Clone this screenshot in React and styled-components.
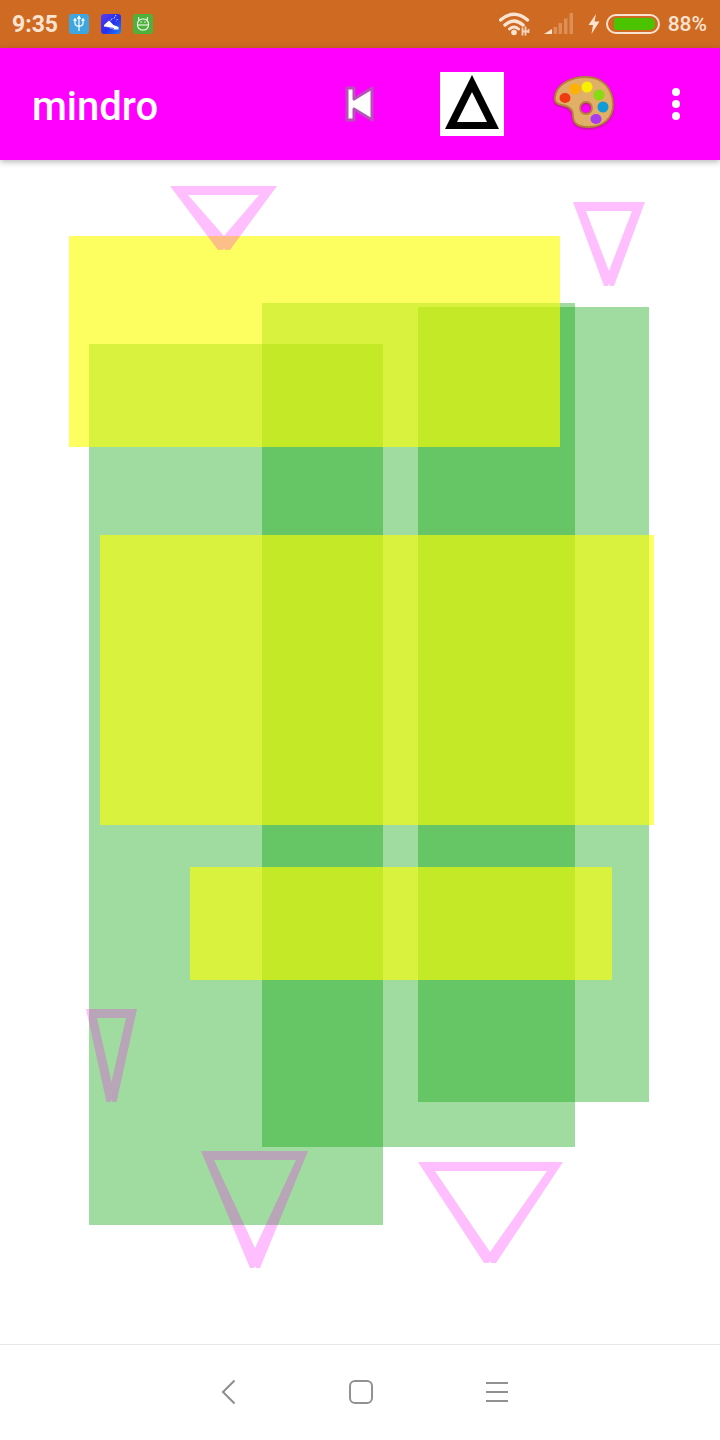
import React from "react";
import styled, { createGlobalStyle } from "styled-components";

const greens = [
  { x: 89, y: 344, w: 294, h: 881 },
  { x: 262, y: 303, w: 313, h: 844 },
  { x: 418, y: 307, w: 231, h: 795 },
];

const yellows = [
  { x: 69, y: 236, w: 491, h: 211 },
  { x: 100, y: 535, w: 554, h: 290 },
  { x: 190, y: 867, w: 422, h: 113 },
];

// coords are page pixels: outer top edge, inner top edge, inner tip, outer tip
const triangles = [
  { l: 170, r: 277, t: 186, il: 188, ir: 259, it: 195, ax: 224, ay: 236, by: 250, hw: 6 },
  { l: 573, r: 645, t: 202, il: 586, ir: 632, it: 211, ax: 609, ay: 271, by: 286, hw: 5 },
  { l: 86, r: 137, t: 1009, il: 97, ir: 126, it: 1018, ax: 111.5, ay: 1082, by: 1102, hw: 5 },
  { l: 201, r: 308, t: 1151, il: 214, ir: 296, it: 1160, ax: 255, ay: 1248, by: 1268, hw: 5 },
  { l: 418, r: 563, t: 1162, il: 435, ir: 547, it: 1171, ax: 490, ay: 1252, by: 1263, hw: 6 },
];

const CANVAS_TOP = 160;

const Triangle = ({ l, r, t, il, ir, it, ax, ay, by, hw }) => {
  const outer = `M${l} ${t}H${r}L${ax + hw} ${by}H${ax + 1}L${ax} ${by - 2}L${ax - 1} ${by}H${ax - hw}Z`;
  const inner = `M${il} ${it}H${ir}L${ax} ${ay}Z`;
  return (
    <TriangleSvg
      $x={l}
      $y={t - CANVAS_TOP}
      width={r - l}
      height={by - t}
      viewBox={`${l} ${t} ${r - l} ${by - t}`}
    >
      <path d={outer + inner} fillRule="evenodd" fill="rgba(255,0,255,.25)" />
    </TriangleSvg>
  );
};

const UsbGlyph = () => (
  <svg width="20" height="20" viewBox="0 0 20 20" fill="none" stroke="#fff" strokeWidth="1.2">
    <path d="M10 3V17M6 6V9.500Q6 11.500 10 12.500Q14 11.500 14 9.500V6" />
    <path d="M10 2.500L8.800 4.500H11.200ZM6 4.800L5.100 6.200H6.900ZM14 4.800L13.100 6.200H14.900Z" fill="#fff" />
  </svg>
);

const ShoeGlyph = () => (
  <svg width="20" height="20" viewBox="0 0 20 20">
    <path d="M3 11L8 6.500L10 8.500L12.500 11L17.500 13V15.500L13 15.500L3 12.500Z" fill="#fff" />
    <path d="M4 13L13 14.500" stroke="#2430f0" strokeWidth=".8" />
    <path d="M11 4.500L9.500 7M15 1L13 4.500M16.500 5L15 7.500" stroke="#d8ecff" strokeWidth="1" strokeDasharray="1.500 1" fill="none" />
  </svg>
);

const RobotGlyph = () => (
  <svg width="20" height="20" viewBox="0 0 20 20" fill="none" stroke="#fff" strokeWidth="1.100">
    <rect x="4.500" y="5" width="11" height="11" rx="5" />
    <path d="M4.500 11H15.500M6 6L5.500 3M14 6L14.500 3" />
    <path d="M7.500 8H8.500M11.500 8H12.500" strokeWidth="1.400" />
  </svg>
);

const WifiGlyph = () => (
  <svg width="34" height="24" viewBox="0 0 34 24" fill="none" stroke="#fbe3d2" strokeLinecap="round">
    <path d="M1.500 8Q15 -3.500 28.500 8" strokeWidth="3.400" />
    <path d="M6 13Q15 5 24 13" strokeWidth="3.400" />
    <path d="M10.500 17Q15 13 19.500 17" strokeWidth="3" />
    <circle cx="15" cy="20.500" r="2.800" fill="#fbe3d2" stroke="none" />
    <path d="M23.500 15.500V23.500M26.500 14.500V23.500M29.500 17V21M23.500 19.500H30" strokeWidth="1.800" strokeLinecap="butt" stroke="#f6d5bd" />
  </svg>
);

const SignalGlyph = () => (
  <svg width="30" height="22" viewBox="0 0 30 22">
    <path d="M0 21L8 16V21Z" fill="#fbe3d2" />
    <path d="M9.500 14H13V21H9.500ZM14.500 10H18V21H14.500ZM20 5.500H23.500V21H20ZM25.500 0H29V21H25.500Z" fill="#fbe3d2" opacity=".3" />
  </svg>
);

const BoltGlyph = () => (
  <svg width="12" height="20" viewBox="0 0 12 20">
    <path d="M8 0L0.500 11H5L3.500 20L11.500 7.500H6.500Z" fill="#fbe3d2" />
  </svg>
);

const PaletteGlyph = () => (
  <svg width="62" height="52" viewBox="0 0 62 52">
    <path
      d="M2 21C3 9 17 1 33 1C49 1 60 12 60 29C60 42 50 51 36 51C24 51 20 47 20 39C20 32 15 30 9 29C4 28 1 26 2 21ZM33 26A6 6 0 1 0 33 38A6 6 0 1 0 33 26Z"
      fill="#e0b066"
      stroke="#b67f3c"
      strokeWidth="1.800"
      fillRule="evenodd"
    />
    <ellipse cx="12" cy="22" rx="5.500" ry="5" fill="#f03a10" />
    <ellipse cx="22" cy="13" rx="5.500" ry="5.500" fill="#ffb000" />
    <ellipse cx="34" cy="11" rx="5.500" ry="5.500" fill="#f8f000" />
    <ellipse cx="46" cy="19" rx="5.500" ry="5.500" fill="#86dc10" />
    <ellipse cx="50" cy="31" rx="5.500" ry="5.500" fill="#109cd8" />
    <ellipse cx="43" cy="43" rx="5.500" ry="5" fill="#a83cf0" />
  </svg>
);

const App = () => (
  <Page>
    <GlobalStyle />
    <StatusBar>
      <Clock>9:35</Clock>
      <AppBadges>
        <AppBadge $bg="#3ea6e0"><UsbGlyph /></AppBadge>
        <AppBadge $bg="linear-gradient(135deg,#5a3cf0 0%,#2430f0 55%,#1a8cf0 100%)"><ShoeGlyph /></AppBadge>
        <AppBadge $bg="#4fb03c"><RobotGlyph /></AppBadge>
      </AppBadges>
      <SystemIcons>
        <WifiGlyph />
        <SignalSlot><SignalGlyph /></SignalSlot>
        <BoltSlot><BoltGlyph /></BoltSlot>
        <Battery>
          <BatteryFill />
        </Battery>
        <BatteryText>88%</BatteryText>
      </SystemIcons>
    </StatusBar>

    <Toolbar>
      <Title>mindro</Title>
      <Actions>
        <svg width="30" height="36" viewBox="0 0 30 36">
          <path
            d="M2 2H9V13L27 2V34L9 23V34H2Z"
            fill="#fff"
            stroke="#b94fb9"
            strokeWidth="3"
            strokeLinejoin="round"
          />
        </svg>
        <DeltaButton>
          <svg width="64" height="64" viewBox="0 0 64 64">
            <path d="M32 3L59 57H5ZM32 20L17 50H47Z" fill="#000" fillRule="evenodd" />
          </svg>
        </DeltaButton>
        <PaletteSlot>
          <PaletteGlyph />
        </PaletteSlot>
        <Overflow>
          <Dot />
          <Dot />
          <Dot />
        </Overflow>
      </Actions>
    </Toolbar>

    <Canvas>
      {greens.map((r) => (
        <GreenBlock key={r.x} $x={r.x} $y={r.y - CANVAS_TOP} $w={r.w} $h={r.h} />
      ))}
      {yellows.map((r) => (
        <YellowBlock key={r.x} $x={r.x} $y={r.y - CANVAS_TOP} $w={r.w} $h={r.h} />
      ))}
      {triangles.map((t) => (
        <Triangle key={t.l} {...t} />
      ))}
    </Canvas>

    <NavBar>
      <svg width="14" height="26" viewBox="0 0 14 26" fill="none" stroke="#8f8f8f" strokeWidth="2">
        <path d="M13.500 1.500L2 13L13.500 24.500" />
      </svg>
      <HomeKey />
      <MenuKey>
        <MenuLine />
        <MenuLine />
        <MenuLine />
      </MenuKey>
    </NavBar>
  </Page>
);

export default App;

const GlobalStyle = createGlobalStyle`
  html, body {
    margin: 0;
    background: #fff;
    font-family: Roboto, "Liberation Sans", sans-serif;
  }
`;

const Page = styled.div`
  width: 720px;
  height: 1440px;
  display: flex;
  flex-direction: column;
  overflow: hidden;
  background: #fff;
`;

const StatusBar = styled.div`
  height: 48px;
  flex: none;
  display: flex;
  align-items: center;
  padding: 0 13px 0 12px;
  background: #cf6a22;
  color: #fbe3d2;
`;

const Clock = styled.span`
  width: 57px;
  font-size: 23px;
  font-weight: 700;
`;

const AppBadges = styled.div`
  display: flex;
  gap: 12px;
`;

const AppBadge = styled.span`
  width: 20px;
  height: 20px;
  display: flex;
  border-radius: 3px;
  background: ${(p) => p.$bg};
`;

const SystemIcons = styled.div`
  margin-left: auto;
  display: flex;
  align-items: center;
`;

const SignalSlot = styled.span`
  display: flex;
  margin-left: 11px;
`;

const BoltSlot = styled.span`
  display: flex;
  margin-left: 14px;
`;

const Battery = styled.span`
  width: 54px;
  height: 20px;
  box-sizing: border-box;
  margin-left: 6px;
  padding: 2px 3px 2px 6px;
  border: 2px solid #fbe3d2;
  border-radius: 10px;
`;

const BatteryFill = styled.span`
  display: block;
  height: 100%;
  width: 41px;
  border-radius: 2px 5px 5px 2px;
  background: #4cc300;
`;

const BatteryText = styled.span`
  margin-left: 8px;
  font-size: 21px;
  font-weight: 500;
`;

const Toolbar = styled.header`
  position: relative;
  z-index: 2;
  height: 112px;
  flex: none;
  display: flex;
  align-items: center;
  justify-content: space-between;
  padding: 0 40px 0 32px;
  background: #f0f;
  box-shadow: 0 2px 6px rgba(0, 0, 0, 0.28);
`;

const Title = styled.h1`
  margin: 4px 0 0;
  color: #fff;
  font-size: 40px;
  font-weight: 500;
`;

const Actions = styled.div`
  display: flex;
  align-items: center;
`;

const DeltaButton = styled.div`
  width: 64px;
  height: 64px;
  margin-left: 65px;
  background: #fff;
`;

const PaletteSlot = styled.div`
  height: 52px;
  margin: -4px 0 0 49px;
  filter: drop-shadow(0 1px 1px rgba(110, 50, 0, 0.55));
`;

const Overflow = styled.div`
  display: flex;
  flex-direction: column;
  gap: 4px;
  margin-left: 57px;
`;

const Dot = styled.span`
  width: 8px;
  height: 8px;
  border-radius: 50%;
  background: #fff;
`;

const Canvas = styled.main`
  position: relative;
  flex: 1;
`;

const Block = styled.div`
  position: absolute;
  left: ${(p) => p.$x}px;
  top: ${(p) => p.$y}px;
  width: ${(p) => p.$w}px;
  height: ${(p) => p.$h}px;
`;

const GreenBlock = styled(Block)`
  background: rgba(11, 165, 11, 0.39);
`;

const YellowBlock = styled(Block)`
  background: rgba(252, 255, 0, 0.62);
`;

const TriangleSvg = styled.svg`
  position: absolute;
  left: ${(p) => p.$x}px;
  top: ${(p) => p.$y}px;
`;

const NavBar = styled.nav`
  height: 96px;
  flex: none;
  box-sizing: border-box;
  display: flex;
  align-items: center;
  gap: 114px;
  padding: 0 0 1px 221px;
  border-top: 1px solid #e6e6e6;
`;

const HomeKey = styled.span`
  width: 24px;
  height: 24px;
  box-sizing: border-box;
  border: 2.5px solid #919191;
  border-radius: 6px;
`;

const MenuKey = styled.span`
  width: 22px;
  margin-left: -1px;
  display: flex;
  flex-direction: column;
  gap: 7px;
`;

const MenuLine = styled.span`
  height: 2px;
  background: #919191;
`;
